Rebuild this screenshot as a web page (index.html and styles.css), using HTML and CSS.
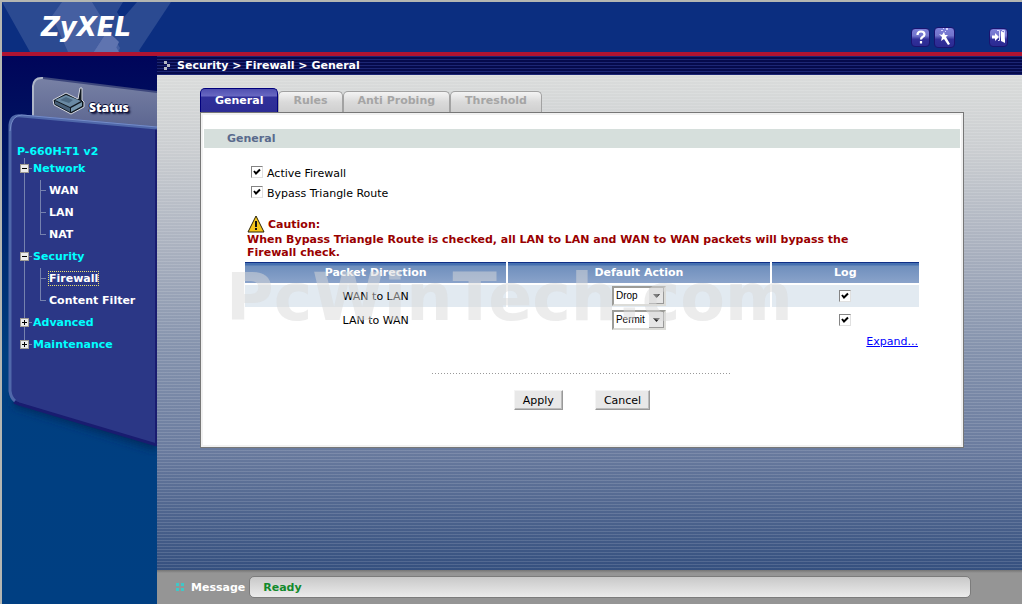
FILE: index.html
```html
<!DOCTYPE html>
<html lang="en">
<head>
<meta charset="utf-8">
<title>ZyXEL - Firewall</title>
<link rel="stylesheet" href="styles.css">
</head>
<body>
<div class="page">
  <header class="header">
    <svg class="header-art" width="180" height="50" viewBox="0 0 180 50" aria-hidden="true">
      <path d="M0 0H121L115 10L138 50H28Z" fill="#2b4a91"/>
      <path d="M135 0H169L136 50H92Z" fill="#2b4a91"/>
      <path d="M60 0H90L118 46L116 50H66L50 14Z" fill="#455fa1"/>
      <path d="M92 50L105 30L117 50Z" fill="#5f74b0"/>
      <path d="M105 30L113 36L117 40L112 50H92Z" fill="#5f74b0"/>
    </svg>
    <span class="logo">ZyXEL</span>
    <nav class="tools">
      <button class="tool" aria-label="Help"><svg width="20" height="20" viewBox="0 0 20 20"><path d="M6.500 8Q6.500 4.500 10 4.500Q13.500 4.500 13.500 7.500Q13.500 9 11.500 10Q10 11 10 12.500M10 14V16.500" fill="none" stroke="#fff" stroke-width="2.200"/></svg></button>
      <button class="tool tool-wizard" aria-label="Wizard"><svg width="22" height="22" viewBox="0 0 22 22"><path d="M5 8L8 9L10 6L11 9L14 9L12 11L16 18L14 19L10 13L7 15L8 11Z" fill="#fff"/><path d="M7 4h2v1H7zM12 2h2v2h-2zM11 5h1v1h-1zM9 2h1v1H9z" fill="#d5d5ff"/></svg></button>
      <button class="tool tool-logout" aria-label="Logout"><svg width="20" height="20" viewBox="0 0 20 20"><path d="M3 8.500h3V6l4 4-4 4v-2.500H3zM12 4l4 2v10l-4-2z" fill="#fff"/><path d="M8 3.500h2.500v10H9M13 3.500h2.500v9" fill="none" stroke="#dcdcff"/></svg></button>
    </nav>
  </header>
  <div class="body">
    <aside class="sidebar">
      <svg class="sidebar-art" width="155" height="400" viewBox="0 0 155 400" aria-hidden="true">
        <defs>
          <linearGradient id="tab" x1="0" y1="0" x2="0" y2="1"><stop offset="0" stop-color="#7881a5"/><stop offset="1" stop-color="#5a648f"/></linearGradient>
          <filter id="soft" x="-20%" y="-20%" width="140%" height="140%"><feGaussianBlur stdDeviation="4"/></filter>
        </defs>
        <path d="M31 70V30Q32 21 41 22L155 36V75Z" fill="url(#tab)"/>
        <path d="M31 65V30Q32 21 41 22" fill="none" stroke="#aeb6c8" stroke-width="2"/>
        <path d="M41 22L155 36" stroke="#3d477c" stroke-width="2"/>
        <path d="M12 340V350L155 394V375Z" fill="#002b5c" filter="url(#soft)"/>
        <path d="M8 69Q9 58 20 59L155 71V389L17 347Q9 344 8 335Z" fill="#2b3786"/>
        <path d="M12 346L17 348L155 389" fill="none" stroke="#191c70" stroke-width="3"/>
        <path d="M154 72V389" stroke="#191c70" stroke-width="2"/>
        <path d="M13 345Q9 342 8 335V69Q9 58 20 60L155 72" fill="none" stroke="#5068aa" stroke-width="3"/>
        <path d="M8 75Q9 59 20 59L155 71" fill="none" stroke="#758cc8" stroke-width="1"/>
      </svg>
      <a class="status" href="#status">
        <svg width="34" height="28" viewBox="0 0 34 28" aria-hidden="true">
          <path d="M1 13L14 6L26 12L28 1H30V13L32 15V20L19 27L2 18Z" fill="#101820" stroke="#d6dae2" stroke-width="1"/>
          <path d="M3 13L14 8L29 14L18 20Z" fill="#6a8aa4"/>
          <path d="M3 14L18 21V25L3 17Z" fill="#465f78"/>
          <path d="M19 21L30 15V19L19 25Z" fill="#7696ac"/>
          <path d="M8 13L14 10L21 13L17 16Z" fill="#4b6882"/>
        </svg>
        <span>Status</span>
      </a>
      <nav class="menu">
        <div class="model">P-660H-T1 v2</div>
        <ul class="tree">
          <li><a class="node minus" href="#network">Network</a>
            <ul class="sub">
              <li><a href="#wan">WAN</a></li>
              <li><a href="#lan">LAN</a></li>
              <li><a href="#nat">NAT</a></li>
            </ul>
          </li>
          <li><a class="node minus" href="#security">Security</a>
            <ul class="sub">
              <li><a class="current" href="#firewall">Firewall</a></li>
              <li><a href="#filter">Content Filter</a></li>
            </ul>
          </li>
          <li><a class="node plus" href="#advanced">Advanced</a></li>
          <li><a class="node plus" href="#maintenance">Maintenance</a></li>
        </ul>
      </nav>
    </aside>
    <div class="main">
      <div class="crumbs">
        <svg width="8" height="10" viewBox="0 0 8 10" aria-hidden="true"><path d="M0 0h3v3H0zM3 3h3v3H3zM0 6h3v3H0z" fill="#b4b8c4"/></svg>
        Security &gt; Firewall &gt; General
      </div>
      <main class="content">
        <div class="tabs">
          <button class="tab active">General</button>
          <button class="tab">Rules</button>
          <button class="tab">Anti Probing</button>
          <button class="tab">Threshold</button>
        </div>
        <form class="panel">
          <h1 class="section">General</h1>
          <div class="fields">
            <label class="check"><input type="checkbox" checked>Active Firewall</label>
            <label class="check"><input type="checkbox" checked>Bypass Triangle Route</label>
            <div class="caution">
              <div class="caution-head">
                <svg width="18" height="18" viewBox="0 0 18 18" aria-hidden="true"><path d="M9 1L17 17H1Z" fill="#f5c61c" stroke="#2a2205" stroke-linejoin="round"/><path d="M8 6h2v6H8zM8 13h2v2H8z" fill="#111"/></svg>
                Caution:
              </div>
              When Bypass Triangle Route is checked, all LAN to LAN and WAN to WAN packets will bypass the Firewall check.
            </div>
            <div class="rules">
              <table class="grid">
                <thead><tr><th class="wide">Packet Direction</th><th class="wide">Default Action</th><th>Log</th></tr></thead>
                <tbody>
                  <tr class="odd"><td>WAN to LAN</td><td><select aria-label="WAN to LAN action"><option>Drop</option><option>Permit</option></select></td><td><input type="checkbox" aria-label="Log WAN to LAN" checked></td></tr>
                  <tr><td>LAN to WAN</td><td><select aria-label="LAN to WAN action"><option>Permit</option><option>Drop</option></select></td><td><input type="checkbox" aria-label="Log LAN to WAN" checked></td></tr>
                </tbody>
              </table>
              <div class="watermark">PcWinTech.com</div>
            </div>
            <div class="expand"><a href="#expand">Expand...</a></div>
          </div>
          <div class="actions">
            <button type="button">Apply</button>
            <button type="button">Cancel</button>
          </div>
        </form>
      </main>
      <footer class="message">
        <svg width="8" height="8" viewBox="0 0 8 8" aria-hidden="true"><path d="M0 0h3v3H0zM5 0h3v3H5zM0 5h3v3H0zM5 5h3v3H5z" fill="#3fc8c8"/></svg>
        <span class="message-label">Message</span>
        <output class="message-text">Ready</output>
      </footer>
    </div>
  </div>
</div>
</body>
</html>
```

FILE: styles.css
```css
* { box-sizing: border-box; }

body {
  margin: 0;
  font: 11px/13px "DejaVu Sans", Verdana, sans-serif;
  color: #000;
}

ul { list-style: none; margin: 0; padding: 0; }
button, select, input { margin: 0; font: inherit; }

.page {
  display: flex;
  flex-direction: column;
  min-height: 100vh;
  border: solid #b4b6b2;
  border-width: 2px 0 0 2px;
}

.header {
  position: relative;
  display: flex;
  align-items: center;
  justify-content: space-between;
  height: 54px;
  padding: 0 14px 0 39px;
  background: #0b2e80;
  border-bottom: 4px solid #ae1432;
}

.header-art { position: absolute; left: 0; top: 0; }

.logo {
  position: relative;
  font: italic 700 26px/32px "DejaVu Sans", Verdana, sans-serif;
  color: #fff;
}

.tools { display: flex; align-items: center; gap: 4px; padding-top: 20px; }

.tool {
  display: flex;
  align-items: center;
  justify-content: center;
  width: 19px;
  height: 19px;
  padding: 0;
  border: 1px solid #1a1470;
  border-radius: 4px;
  background: linear-gradient(#7d7fd8, #7274cc 40%, #31309a 60%, #2b2a92);
}

.tool svg { flex: none; }
.tool-wizard { width: 21px; height: 21px; }
.tool-logout { margin-left: 30px; }

.body { display: flex; flex: 1; }

.sidebar {
  position: relative;
  flex: none;
  width: 155px;
  background: linear-gradient(#00055a, #00105f 60px, #003f80 300px, #003f82);
}

.sidebar-art { position: absolute; left: 0; top: 0; }

.status {
  position: relative;
  display: flex;
  align-items: center;
  gap: 3px;
  margin-top: 30px;
  padding-left: 50px;
  font: 900 12px/15px "Open Sans", sans-serif;
  color: #fff;
  text-decoration: none;
  text-shadow: 1px 1px #10143c, -1px 0 #10143c, 0 -1px #10143c, 2px 2px 2px #10143c;
}

.status span { padding-top: 14px; }

.menu {
  position: relative;
  margin-top: 30px;
  padding-left: 15px;
  font-weight: bold;
}

.model { color: #0ff; }

.tree {
  padding-left: 3px;
  background: linear-gradient(#7581ae, #7581ae) 7px 0 / 1px 187px no-repeat;
}

.node {
  display: block;
  padding-left: 13px;
  line-height: 22px;
  color: #0ff;
  text-decoration: none;
  background-repeat: no-repeat;
  background-position: 0 6px;
}

.minus { background-image: url("data:image/svg+xml,%3Csvg xmlns='http://www.w3.org/2000/svg' width='12' height='9'%3E%3Cpath d='M9 4h3v1H9z' fill='%237581ae'/%3E%3Cpath d='M0 0h9v9H0z' fill='%23a09c94'/%3E%3Cpath d='M1 1h7v7H1z' fill='%23ececec'/%3E%3Cpath d='M2 4h5v1H2z'/%3E%3C/svg%3E"); }
.plus { background-image: url("data:image/svg+xml,%3Csvg xmlns='http://www.w3.org/2000/svg' width='12' height='9'%3E%3Cpath d='M9 4h3v1H9z' fill='%237581ae'/%3E%3Cpath d='M0 0h9v9H0z' fill='%23a09c94'/%3E%3Cpath d='M1 1h7v7H1z' fill='%23ececec'/%3E%3Cpath d='M2 4h5v1H2zM4 2h1v5H4z'/%3E%3C/svg%3E"); }

.sub { padding-left: 20px; }

.sub li {
  padding-left: 9px;
  line-height: 22px;
  background:
    linear-gradient(#7581ae, #7581ae) 0 0 / 1px 100% no-repeat,
    linear-gradient(#7581ae, #7581ae) 0 10px / 6px 1px no-repeat;
}

.sub li:last-child { background-size: 1px 11px, 6px 1px; }
.sub a { color: #fff; text-decoration: none; }
.sub .current { outline: 1px dotted #e8e070; }

.main {
  display: flex;
  flex: 1;
  flex-direction: column;
  min-width: 0;
}

.crumbs {
  display: flex;
  align-items: center;
  gap: 5px;
  height: 19px;
  padding-left: 7px;
  font-weight: bold;
  color: #fff;
  background: repeating-linear-gradient(#1c2674 0 1px, #050a4c 1px 3px);
}

.content {
  flex: 1;
  padding: 13px 58px 40px 43px;
  background:
    repeating-linear-gradient(rgba(255, 255, 255, .13) 0 1px, transparent 1px 3px),
    linear-gradient(#dadcdb, #cbced1 15%, #aab1bf 35%, #8593ad 55%, #6b7c9f 75%, #35507f);
}

.tabs { display: flex; align-items: flex-end; }

.tab {
  height: 21px;
  padding: 0 14px 4px;
  border: 1px solid #a2a2a2;
  border-bottom: 0;
  border-radius: 5px 5px 0 0;
  font-weight: bold;
  color: #a5a5a5;
  background: linear-gradient(#f4f4f4, #dadada 50%, #cfcfcf);
}

.tab.active {
  height: 24px;
  padding-bottom: 1px;
  border-color: #00007c;
  color: #fff;
  background: linear-gradient(#5050b0, #6868c2 7px, #30309a 8px, #2c2c94);
}

.panel {
  min-height: 336px;
  padding: 16px 3px;
  border: 1px solid #777;
  background: #fff;
  box-shadow: inset 0 0 0 2px #f1f1f1;
}

.section {
  margin: 0;
  padding: 3px 23px;
  font-size: 11px;
  line-height: 13px;
  color: #596a8c;
  background: #d6dfdc;
}

.fields { padding: 15px 41px 0; }

.check {
  display: flex;
  align-items: center;
  gap: 4px;
  height: 20px;
  padding-left: 6px;
}

input[type="checkbox"] {
  appearance: none;
  display: block;
  width: 12px;
  height: 12px;
  border: 1px solid;
  border-color: #848484 #e0e0e0 #e0e0e0 #848484;
  background: #fff url("data:image/svg+xml,%3Csvg xmlns='http://www.w3.org/2000/svg' width='10' height='10'%3E%3Cpath d='M2 4L4 6.500L8 2.500' fill='none' stroke='%23000' stroke-width='2'/%3E%3C/svg%3E") center no-repeat;
}

.check input { margin-bottom: 2px; }

.caution {
  padding: 12px 36px 3px 2px;
  font-weight: bold;
  color: #900;
}

.caution-head {
  display: flex;
  align-items: center;
  gap: 3px;
}

.rules { position: relative; margin: -2px -2px 0; }

.grid {
  width: 100%;
  table-layout: fixed;
  border-collapse: separate;
  border-spacing: 2px;
  text-align: center;
}

.wide { width: 39%; }
.grid th, .grid td { padding: 0; height: 22px; }

.grid th {
  height: 21px;
  color: #fff;
  background: linear-gradient(#0f2f86 0 1px, #4570b0 1px 3px, #6f8fbd 4px, #8aa3ca);
}

.odd td { background: #e2eaf1; }
.grid input { margin: 0 auto; }

.grid select {
  appearance: none;
  display: block;
  width: 54px;
  height: 20px;
  margin: 0 auto;
  padding: 0 2px;
  border: 2px solid;
  border-color: #9c9c98 #dcdcd8 #dcdcd8 #9c9c98;
  border-radius: 0;
  font: 10px/16px "Liberation Sans", Arial, sans-serif;
  color: #000;
  background: #fff url("data:image/svg+xml,%3Csvg xmlns='http://www.w3.org/2000/svg' width='15' height='16'%3E%3Cpath d='M0 0h15v16H0z' fill='%23999'/%3E%3Cpath d='M0 0h14v15H0z' fill='%23e6e6e6'/%3E%3Cpath d='M4 6h7L7.500 10z' fill='%23222'/%3E%3C/svg%3E") right center no-repeat;
}

.watermark {
  position: absolute;
  left: -17px;
  top: 0;
  font: bold 65px/76px "DejaVu Sans", Verdana, sans-serif;
  color: rgba(218, 218, 218, .5);
  pointer-events: none;
}

.expand { padding: 2px 1px; text-align: right; }
.expand a { color: #00f; }

.actions {
  display: flex;
  justify-content: center;
  gap: 32px;
  width: 300px;
  margin: 23px auto 0;
  padding-top: 17px;
  background: repeating-linear-gradient(90deg, #999 0 1px, transparent 1px 3px) top / 100% 1px no-repeat;
}

.actions button {
  height: 20px;
  padding: 0 8px;
  border: 1px solid;
  border-color: #f4f4f4 #999 #999 #f4f4f4;
  box-shadow: inset -1px -1px #bbb;
  background: #e8e8e8;
}

.message {
  display: flex;
  align-items: center;
  height: 34px;
  padding: 0 51px 0 19px;
  font-weight: bold;
  color: #fff;
  background: linear-gradient(#747474, #959595 3px);
}

.message-label { padding: 0 4px 0 7px; }

.message-text {
  flex: 1;
  padding: 4px 13px 3px;
  border: 1px solid #7c7c7c;
  border-radius: 5px;
  color: #128a2c;
  background: linear-gradient(#c8c8c8, #ececec);
}
```
